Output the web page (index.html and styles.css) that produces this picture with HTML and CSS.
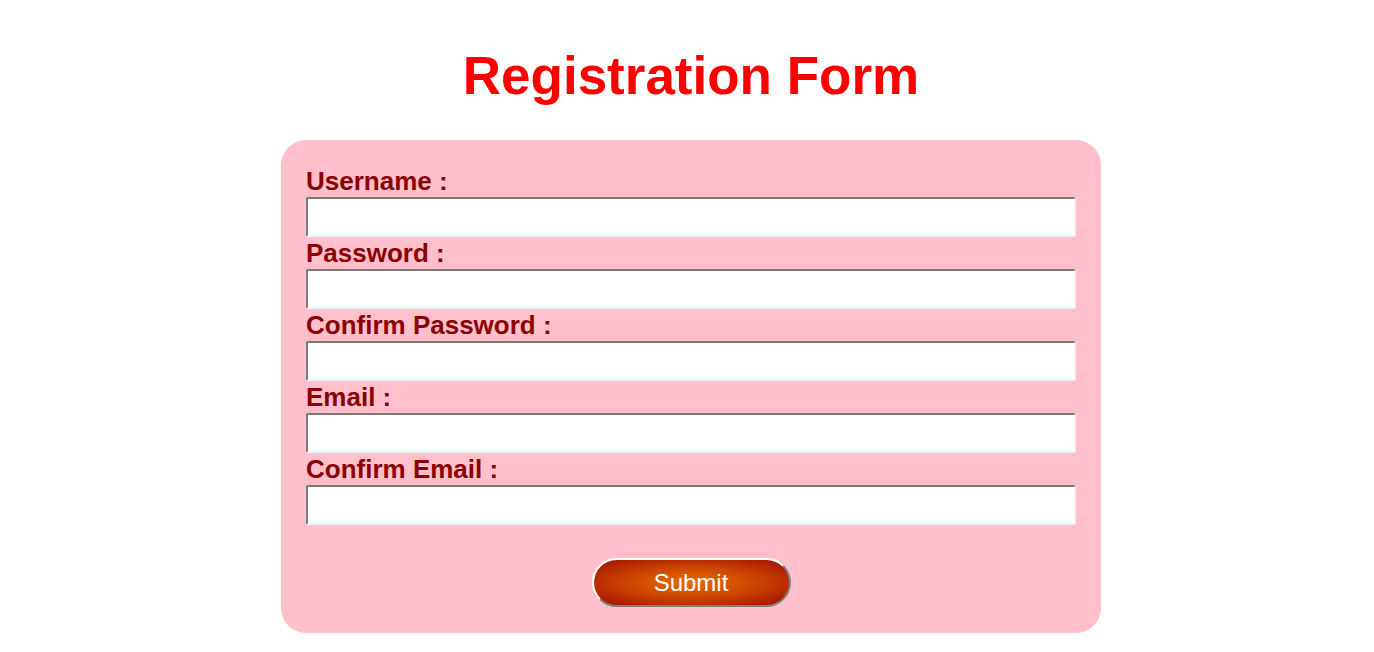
FILE: index.html
```html
<!DOCTYPE html>
<html>
<head>
<meta charset="utf-8">
<title>Registration Form</title>
<link rel="stylesheet" href="styles.css">
</head>
<body>
<h1 class="title">Registration Form</h1>
<form class="form">
  <label class="label" for="u">Username :</label>
  <input class="field" id="u" type="text">
  <label class="label" for="p">Password :</label>
  <input class="field" id="p" type="password">
  <label class="label" for="cp">Confirm Password :</label>
  <input class="field" id="cp" type="password">
  <label class="label" for="e">Email :</label>
  <input class="field" id="e" type="text">
  <label class="label" for="ce">Confirm Email :</label>
  <input class="field" id="ce" type="text">
  <div class="actions">
    <button class="submit" type="button">Submit</button>
  </div>
</form>
</body>
</html>
```
FILE: styles.css
```css
html, body {
  margin: 0;
  padding: 0;
  background: #ffffff;
}
body {
  padding-left: 8px;
  font-family: "Liberation Sans", Arial, sans-serif;
}
.title {
  margin: 45px 0 34px;
  text-align: center;
  color: #ff0000;
  font-size: 53px;
  font-weight: bold;
  line-height: 61px;
}
.form {
  box-sizing: border-box;
  width: 820px;
  margin: 0 auto;
  background: #ffc0cb;
  border-radius: 25px;
  padding: 25px 25px 26px 25px;
  display: flex;
  flex-direction: column;
}
.label {
  display: block;
  color: #8b0000;
  font-size: 26px;
  font-weight: bold;
  line-height: 32px;
}
.field {
  box-sizing: border-box;
  width: 770px;
  height: 40px;
  margin: 0;
  border-style: solid;
  border-width: 2px;
  border-color: #7a7a7a #f0f0f0 #f0f0f0 #7a7a7a;
  border-radius: 2px;
  background: #ffffff;
  font-family: "Liberation Sans", Arial, sans-serif;
  font-size: 16px;
}
.actions {
  display: flex;
  justify-content: center;
  padding-top: 33px;
}
.submit {
  box-sizing: border-box;
  width: 199px;
  height: 49px;
  border-radius: 25px;
  border: 2px solid;
  border-color: #ffffff #808080 #808080 #ffffff;
  background: radial-gradient(ellipse at center, #e86c00 0%, #cc4800 45%, #a00c00 100%);
  color: #ffffff;
  font-family: "Liberation Sans", Arial, sans-serif;
  font-size: 24px;
  padding: 0;
  cursor: pointer;
}
```
